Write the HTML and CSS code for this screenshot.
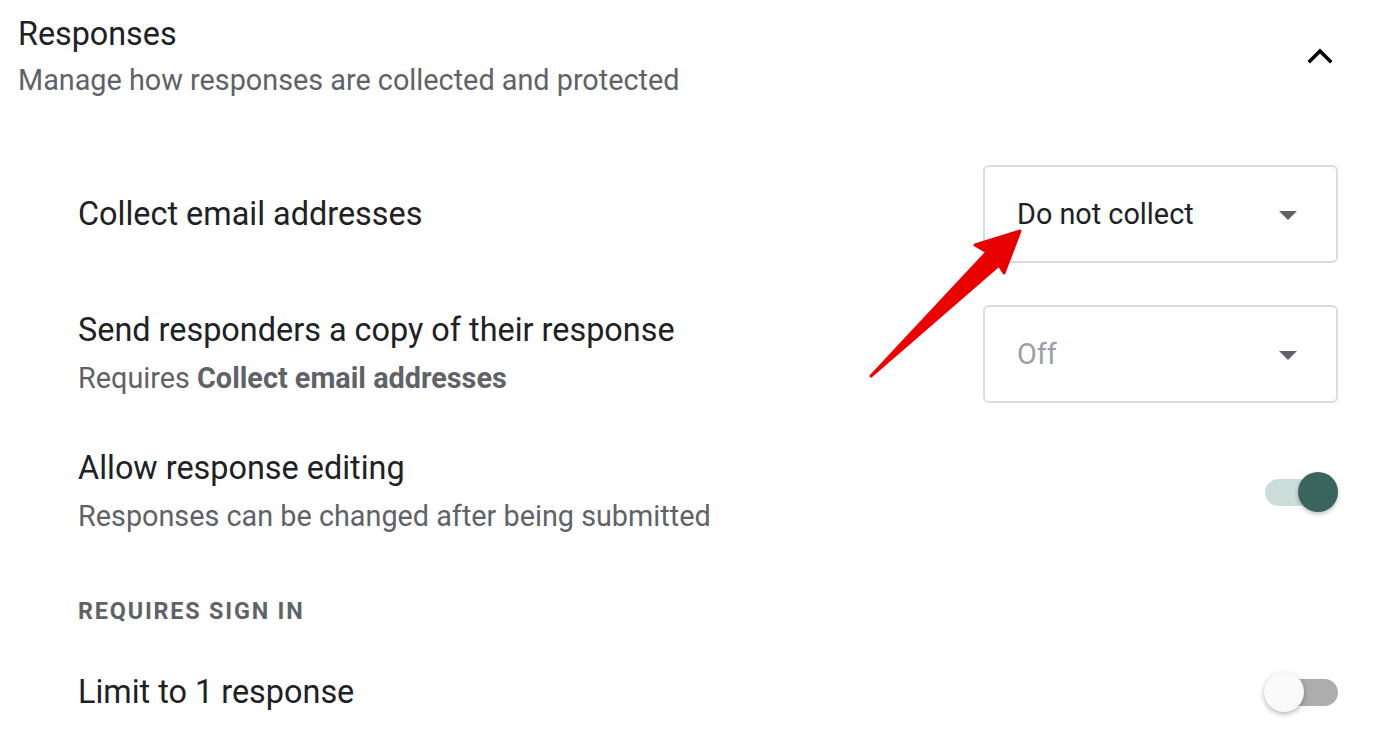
FILE: index.html
```html
<!DOCTYPE html>
<html>
<head>
<meta charset="utf-8">
<link rel="stylesheet" href="styles.css">
</head>
<body>
<div class="page">
  <div class="header">
    <div class="header-text">
      <div class="title">Responses</div>
      <div class="subtitle">Manage how responses are collected and protected</div>
    </div>
    <svg class="chevron" width="24" height="16" viewBox="0 0 24 16"><path d="M2 13 L12 3 L22 13" fill="none" stroke="#000" stroke-width="3.6" stroke-linecap="square"/></svg>
  </div>

  <div class="settings">
    <div class="row row-first">
      <div class="text"><div class="label">Collect email addresses</div></div>
      <div class="select"><span class="value">Do not collect</span><span class="caret"></span></div>
    </div>

    <div class="row row-second">
      <div class="text">
        <div class="label">Send responders a copy of their response</div>
        <div class="sub">Requires <b>Collect email addresses</b></div>
      </div>
      <div class="select"><span class="value disabled">Off</span><span class="caret"></span></div>
    </div>

    <div class="row row-third">
      <div class="text">
        <div class="label">Allow response editing</div>
        <div class="sub">Responses can be changed after being submitted</div>
      </div>
      <div class="toggle on"><span class="track"></span><span class="thumb"></span></div>
    </div>

    <div class="section">REQUIRES SIGN IN</div>

    <div class="row row-fourth">
      <div class="text"><div class="label">Limit to 1 response</div></div>
      <div class="toggle off"><span class="track"></span><span class="thumb"></span></div>
    </div>
  </div>

  <svg class="arrow" width="1378" height="732" viewBox="0 0 1378 732">
    <defs>
      <linearGradient id="ar" x1="0" y1="1" x2="1" y2="0">
        <stop offset="0" stop-color="#f20000"/>
        <stop offset="1" stop-color="#e60000"/>
      </linearGradient>
    </defs>
    <path d="M871 376 L987 252 L975 245 L1020 231 L1004 273 L999 265 Z" fill="url(#ar)" stroke="url(#ar)" stroke-width="3" stroke-linejoin="round"/>
  </svg>
</div>
</body>
</html>
```

FILE: styles.css
```css
html, body {
  margin: 0;
  padding: 0;
  background: #fff;
}
body {
  font-family: Roboto, "Noto Sans", "Liberation Sans", sans-serif;
  color: #202124;
  width: 1378px;
  height: 732px;
  overflow: hidden;
}
.page {
  position: relative;
  width: 1378px;
  height: 732px;
}
.header {
  display: flex;
  justify-content: space-between;
  align-items: center;
  padding: 14px 46px 0 18px;
}
.title {
  font-size: 32.3px;
  line-height: 40px;
  color: #202124;
}
.subtitle {
  margin-top: 6px;
  font-size: 28.8px;
  line-height: 40px;
  color: #5f6368;
}
.chevron {
  display: block;
  margin-top: -2px;
}
.settings {
  padding: 0 40px 0 78px;
}
.row {
  display: grid;
  grid-template-columns: 1fr auto;
  align-items: center;
}
.row-first { margin-top: 65px; }
.row-second { margin-top: 42px; }
.row-third { margin-top: 45px; }
.row-fourth { margin-top: 46px; }
.text {
  display: flex;
  flex-direction: column;
  gap: 8px;
}
.label {
  font-size: 32.4px;
  line-height: 40px;
  color: #202124;
}
.sub {
  font-size: 28.8px;
  line-height: 40px;
  color: #5f6368;
}
.sub b {
  font-weight: 700;
  color: #5f6368;
}
.select {
  box-sizing: border-box;
  width: 355px;
  height: 98px;
  border: 2px solid #dadce0;
  border-radius: 6px;
  display: flex;
  align-items: center;
  justify-content: space-between;
  padding: 0 39px 0 32px;
}
.value {
  font-size: 28.8px;
  color: #202124;
}
.value.disabled {
  color: #9aa0a6;
}
.caret {
  width: 0;
  height: 0;
  border-left: 9px solid transparent;
  border-right: 9px solid transparent;
  border-top: 9px solid #5f6368;
  margin-top: 2px;
}
.section {
  margin-top: 60px;
  font-size: 23.4px;
  line-height: 30px;
  font-weight: 700;
  letter-spacing: 1.8px;
  color: #5f6368;
}
.toggle {
  position: relative;
  width: 74px;
  height: 40px;
}
.track {
  position: absolute;
  left: 1px;
  right: 0;
  top: 7px;
  height: 27px;
  border-radius: 14px;
}
.thumb {
  position: absolute;
  top: 0;
  width: 40px;
  height: 40px;
  border-radius: 50%;
}
.toggle.on .track { background: #cbdcd9; right: 8px; }
.toggle.on .thumb {
  right: 0;
  background: #3a645e;
  box-shadow: 0 2px 4px rgba(0,0,0,0.25);
}
.toggle.off .track { background: #adadad; }
.toggle.off .thumb {
  left: 0;
  background: #fafafa;
  box-shadow: 0 2px 5px rgba(0,0,0,0.3);
}
.arrow {
  position: absolute;
  left: 0;
  top: 0;
  pointer-events: none;
}
```
